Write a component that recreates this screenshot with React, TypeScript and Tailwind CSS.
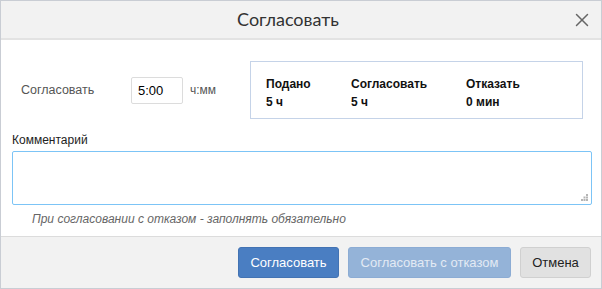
import { X } from 'lucide-react';

export default function App() {
  const stats = [
    { label: 'Подано', value: '5 ч', w: 'w-[85px]' },
    { label: 'Согласовать', value: '5 ч', w: 'w-[115px]' },
    { label: 'Отказать', value: '0 мин', w: 'w-[100px]' },
  ];

  return (
    <div className="w-[602px] h-[289px] border border-[#c9cdd4] bg-white flex flex-col font-['Liberation_Sans',Arial,sans-serif] text-[12px]">
      <div className="relative h-[39px] shrink-0 bg-[#f2f2f2] border-b-2 border-[#e3e3e3] flex items-center justify-center pr-[26px]">
        <span className="font-['Lato',sans-serif] text-[18px] text-[#333]">Согласовать</span>
        <button className="absolute right-[8px] top-[8px] text-[#666]">
          <X className="w-[22px] h-[22px]" strokeWidth={1.6} />
        </button>
      </div>

      <div className="flex-1 px-[10px]">
        <div className="flex items-center mt-[21px]">
          <span className="ml-[10px] w-[110px] text-[12.5px] text-[#555]">Согласовать</span>
          <input
            defaultValue="5:00"
            className="w-[52px] h-[27px] border border-[#dcdcdc] rounded-[2px] px-[6px] text-[13px] text-black outline-none"
          />
          <span className="ml-[7px] w-[60px] text-[#555]">ч:мм</span>
          <div className="w-[333px] h-[58px] border border-[#c5d3e8] pl-[15px] pt-[13px] flex font-bold text-[#111]">
            {stats.map((s) => (
              <div key={s.label} className={`${s.w} flex flex-col leading-[18px]`}>
                <span>{s.label}</span>
                <span>{s.value}</span>
              </div>
            ))}
          </div>
        </div>

        <div className="mt-[12px] ml-[1px] text-[#222]">Комментарий</div>
        <div className="relative mt-[2px] ml-[1px] w-[580px]">
          <textarea className="block w-full h-[54px] border border-[#7cc4f6] rounded-[2px] resize-none outline-none" />
          <svg className="absolute right-[4px] bottom-[4px]" width="7" height="7" viewBox="0 0 7 7" fill="#b5b5b5">
            <rect x="5" y="0" width="2" height="2" />
            <rect x="2.5" y="2.5" width="2" height="2" />
            <rect x="5" y="2.5" width="2" height="2" />
            <rect x="0" y="5" width="2" height="2" />
            <rect x="2.5" y="5" width="2" height="2" />
            <rect x="5" y="5" width="2" height="2" />
          </svg>
        </div>
        <div className="mt-[5px] ml-[21px] italic text-[#666]">При согласовании с отказом - заполнять обязательно</div>
      </div>

      <div className="h-[52px] shrink-0 bg-[#f2f2f2] border-t border-[#dcdcdc] flex items-center justify-end gap-[9px] pr-[10px]">
        <button className="h-[31px] w-[101px] rounded-[3px] bg-[#4a7ec2] border border-[#4373b3] text-white text-[13px]">Согласовать</button>
        <button className="h-[31px] w-[163px] rounded-[3px] bg-[#94b3d8] border border-[#8cacd4] text-[#e3eaf4] text-[13px]">Согласовать с отказом</button>
        <button className="h-[31px] w-[71px] rounded-[3px] bg-[#e1e1e1] border border-[#d0d0d0] text-[#222] text-[13px]">Отмена</button>
      </div>
    </div>
  );
}
